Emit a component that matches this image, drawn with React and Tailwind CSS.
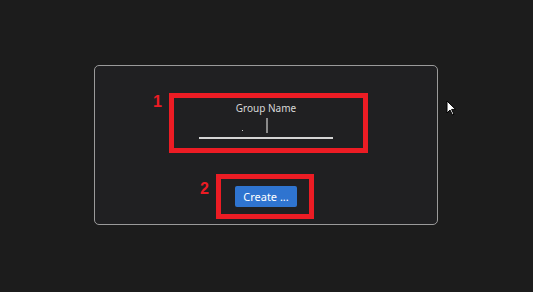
export default function App() {
  return (
    <div className="relative h-[292px] w-[533px] overflow-hidden bg-[#1c1c1c] pl-[94px] pt-[65px]" style={{ fontFamily: '"Noto Sans", "Open Sans", sans-serif' }}>
      {/* dialog */}
      <div className="flex h-[160px] w-[344px] flex-col rounded-[5px] border border-[#9a9a9a] bg-[#202022] pt-[27px]">
        {/* step 1 */}
        <div className="ml-[58px] flex">
          <span className="mt-[1px] w-[16px] text-[16px] leading-none font-bold text-[#ec1c24]" style={{ fontFamily: '"Liberation Sans", sans-serif' }}>1</span>
          <div className="flex h-[60px] w-[199px] flex-col items-center border-[5px] border-[#ec1c24] pr-[5px] pt-[4px]">
            <p className="text-[10px] leading-[12px] text-[#d8d8d8]">Group Name</p>
            <div className="relative mt-[3px] h-[22px] w-[134px] border-b-2 border-[#d4d4d4]">
              <span className="absolute left-[67px] top-[1px] h-[15px] w-[2px] bg-[#8a8a8a]" />
              <span className="absolute left-[43px] top-[13px] h-[1px] w-[1px] bg-[#cfcfcf]" />
            </div>
          </div>
        </div>

        {/* step 2 */}
        <div className="ml-[105px] mt-[21px] flex">
          <span className="mt-[7px] w-[16px] text-[16px] leading-none font-bold text-[#ec1c24]" style={{ fontFamily: '"Liberation Sans", sans-serif' }}>2</span>
          <div className="flex h-[45px] w-[98px] items-center justify-center border-[5px] border-[#ec1c24] pl-[2px]">
            <button className="h-[21px] w-[62px] rounded-[2px] bg-[#2f74d0] text-[11px] leading-[21px] text-white">
              Create ...
            </button>
          </div>
        </div>
      </div>

      {/* mouse pointer */}
      <svg className="absolute left-[446px] top-[100px]" width="11" height="16" viewBox="0 0 11 16">
        <path d="M1 1 L1 13 L4 10 L6.5 15 L8 14.3 L5.6 9.4 L9.6 9.4 Z" fill="#ffffff" stroke="#000000" strokeWidth="1" strokeLinejoin="round" />
      </svg>
    </div>
  )
}
